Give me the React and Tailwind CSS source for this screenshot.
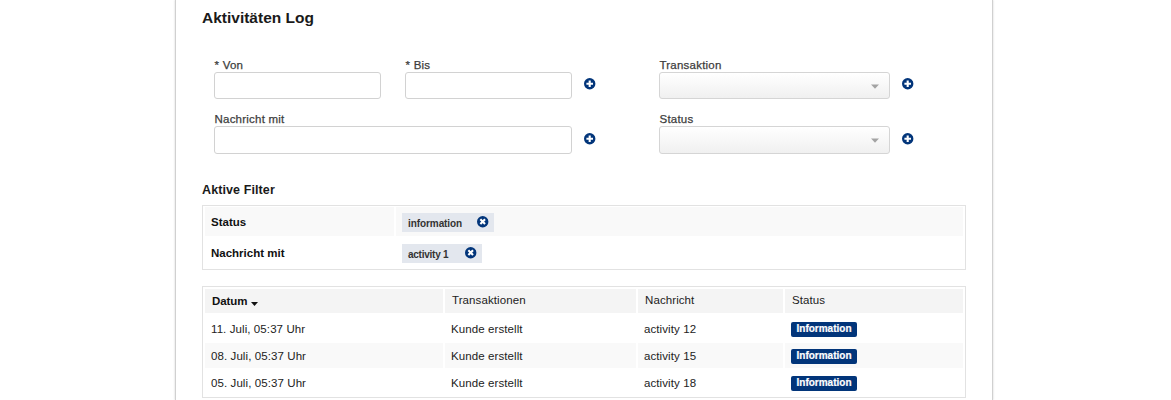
import React from "react";

function CircleIcon({ kind }) {
  return (
    <svg width="12" height="12" viewBox="0 0 12 12" className="block shrink-0">
      <circle cx="5.7" cy="5.7" r="5.7" fill="#02357a" />
      <path
        d="M5.7 2.4V9M2.4 5.7H9"
        stroke="#fff"
        strokeWidth="2.1"
        transform={kind === "remove" ? "rotate(45 5.7 5.7)" : undefined}
      />
    </svg>
  );
}

function AddButton() {
  return (
    <button type="button" className="flex h-[27px] w-3 items-center pb-[3px]">
      <CircleIcon kind="add" />
    </button>
  );
}

function Label({ children, required }) {
  return (
    <div className="h-[14px] pl-[0.5px] whitespace-pre text-[11.5px] leading-[16px] tracking-[0.22px] text-[#3d3d3d] [-webkit-text-stroke:0.25px_#3d3d3d]">
      {required && "* "}
      {children}
    </div>
  );
}

function TextField({ label, required, className, box = "h-[27px]" }) {
  return (
    <div className={className}>
      <Label required={required}>{label}</Label>
      <div className={`mt-px rounded-[3px] border border-[#d2d2d2] bg-white ${box}`} />
    </div>
  );
}

function SelectField({ label, box = "h-[27px]" }) {
  return (
    <div className="w-[231px]">
      <Label>{label}</Label>
      <div
        className={`mt-px flex items-center justify-end rounded-[3px] border border-[#d5d5d5] bg-linear-to-b from-white to-[#f0f0f0] pr-[10px] ${box}`}
      >
        <svg width="8" height="5" viewBox="0 0 8 5" className="mt-px block">
          <path d="M0 0.5H8L4 4.7Z" fill="#a3a3a3" />
        </svg>
      </div>
    </div>
  );
}

const filters = [
  { name: "Status", value: "information", text: "w-[54px] tracking-[-0.08px]" },
  { name: "Nachricht mit", value: "activity 1", text: "w-[42px] tracking-[-0.25px]" },
];

function FilterRow({ filter, shaded }) {
  const bg = shaded ? "bg-[#f9f9f9]" : "";
  return (
    <div className="flex h-[29px] gap-[2px]">
      <div className={`flex w-[189px] items-center pt-[2px] pl-[6px] text-[11.5px] font-bold text-[#111] ${bg}`}>
        {filter.name}
      </div>
      <div className={`flex flex-1 items-center pt-px pl-[6px] ${bg}`}>
        <span className="flex h-[19px] items-center bg-[#e3e7ee] pr-[5px] pl-[6px] text-[10px] font-bold text-[#333]">
          <span className={`${filter.text} mr-[15px] whitespace-nowrap pt-[2px]`}>{filter.value}</span>
          <CircleIcon kind="remove" />
        </span>
      </div>
    </div>
  );
}

const rows = [
  ["11. Juli, 05:37 Uhr", "Kunde erstellt", "activity 12"],
  ["08. Juli, 05:37 Uhr", "Kunde erstellt", "activity 15"],
  ["05. Juli, 05:37 Uhr", "Kunde erstellt", "activity 18"],
];

const grid = "grid grid-cols-[238px_191px_145px_178px] gap-x-[2px] text-[11.5px] tracking-[0.09px] text-[#222]";

export default function App() {
  return (
    <div className="flex h-[400px] w-[1171px] overflow-hidden bg-white font-['Liberation_Sans',Arial,sans-serif]">
      <div className="ml-[175px] h-[400px] w-[818px] border-x border-[#d0d0d0] px-[26px] shadow-[0_0_2px_rgba(0,0,0,0.18)]">
        <h1 className="h-[57px] pt-[8px] text-[15.5px] leading-[19px] font-bold text-[#1a1a1a]">Aktivitäten Log</h1>

        <div className="flex pl-[12px]">
          <div className="flex w-[445px] flex-col gap-[12px]">
            <div className="flex items-end">
              <TextField label="Von" required className="mr-6 w-[167px]" />
              <TextField label="Bis" required className="mr-[12px] w-[167px]" />
              <AddButton />
            </div>
            <div className="flex items-end">
              <TextField label="Nachricht mit" className="mr-[12px] w-[358px]" box="h-[28px]" />
              <AddButton />
            </div>
          </div>
          <div className="flex flex-col gap-[12px]">
            <div className="flex items-end gap-[12px]">
              <SelectField label="Transaktion" />
              <AddButton />
            </div>
            <div className="flex items-end gap-[12px]">
              <SelectField label="Status" box="h-[28px]" />
              <AddButton />
            </div>
          </div>
        </div>

        <h2 className="mt-[28px] h-[23px] pt-px text-[12.5px] leading-[15px] font-bold tracking-[0.1px] text-[#1a1a1a]">
          Aktive Filter
        </h2>
        <div className="flex h-[65px] flex-col gap-[2px] border border-[#e2e2e2] p-[2px] pt-px">
          {filters.map((f, i) => (
            <FilterRow key={f.name} filter={f} shaded={i === 0} />
          ))}
        </div>

        <div className="mt-4 h-[112px] border border-[#e2e2e2] px-[2px] pt-[2px]">
          <div className={`${grid} h-[24px]`}>
            <div className="flex items-center bg-[#f4f4f4] pt-px pl-[7px] font-bold tracking-[-0.1px] text-[#111]">
              Datum
              <svg width="7" height="4" viewBox="0 0 7 4" className="mt-1 ml-[4px] block">
                <path d="M0 0H7L3.5 4Z" fill="#111" />
              </svg>
            </div>
            <div className="flex items-center bg-[#f4f4f4] pl-[7px]">Transaktionen</div>
            <div className="flex items-center bg-[#f4f4f4] pl-[7px]">Nachricht</div>
            <div className="flex items-center bg-[#f4f4f4] pl-[7px]">Status</div>
          </div>
          <div className="mt-[3px] flex flex-col gap-[2px]">
            {rows.map((cells, i) => (
              <div key={cells[0]} className={`${grid} h-[25px]`}>
                {cells.map((cell) => (
                  <div key={cell} className={`flex items-center pt-[2px] pl-[6px] ${i === 1 ? "bg-[#f9f9f9]" : ""}`}>
                    {cell}
                  </div>
                ))}
                <div className={`flex items-center pt-[2px] pl-[6px] ${i === 1 ? "bg-[#f9f9f9]" : ""}`}>
                  <span className="flex h-[15px] w-[66px] items-center justify-center rounded-[2px] bg-[#02357a] pb-[2px] text-[10px] font-bold tracking-normal text-white [-webkit-text-stroke:0.2px_#fff]">
                    Information
                  </span>
                </div>
              </div>
            ))}
          </div>
        </div>
      </div>
    </div>
  );
}
